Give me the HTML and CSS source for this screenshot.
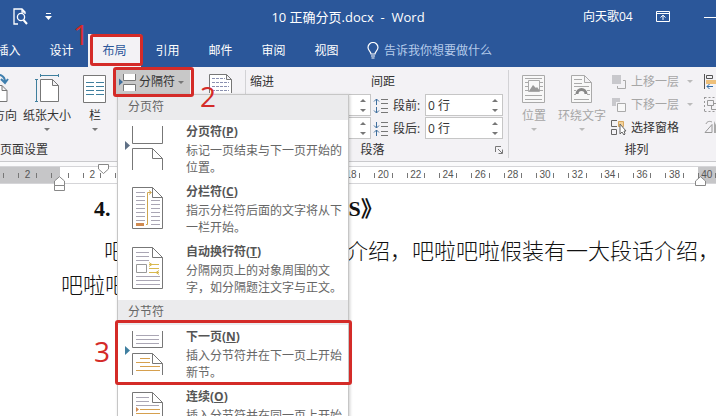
FILE: index.html
```html
<!DOCTYPE html>
<html lang="zh-CN">

<head>
    <meta charset="UTF-8">
    <meta name="viewport" content="width=device-width, initial-scale=1">
    <title>10 正确分页.docx - Word</title>
    <link rel="stylesheet" href="styles.css">
</head>

<body>
    <div class="app">
        <header class="title-bar">
            <div class="quick-access">
                <svg width="16" height="18" viewBox="0 0 16 18" fill="none" stroke="#fff" stroke-width="1.3">
                    <path d="M5 16H1V1h8l3 3v2M9 1v3h3" />
                    <circle cx="8" cy="9" r="3.6" />
                    <path d="M10.500 12l3.500 4" stroke-width="2" />
                </svg>
                <svg width="7" height="8" viewBox="0 0 7 8" fill="#fff">
                    <path d="M1 0h5v1H1zM0 3h7L3.500 7z" />
                </svg>
            </div>
            <div class="doc-title">10 正确分页.docx&nbsp; -&nbsp; Word</div>
            <div class="window-tools">
                <span class="user">向天歌04</span>
                <svg width="14" height="12" viewBox="0 0 14 12" fill="none" stroke="#fff">
                    <path d="M.5.5h13v10H.5zM.5 2.500h13M7 9V4.500M4.500 6.500L7 4.200l2.500 2.300" />
                </svg>
                <span class="minimize"></span>
            </div>
        </header>

        <nav class="tabs">
            <button class="tab">插入</button>
            <button class="tab">设计</button>
            <button class="tab active">布局<span class="mark mark-tab"></span><span class="step step-1">1</span></button>
            <button class="tab">引用</button>
            <button class="tab">邮件</button>
            <button class="tab">审阅</button>
            <button class="tab">视图</button>
            <button class="tell-me">
                <svg width="12" height="17" viewBox="0 0 12 17" fill="none" stroke="#fff" stroke-width="1.2">
                    <path d="M4 12C4 9.500 1 8.500 1 5.500a5 5 0 0 1 10 0C11 8.500 8 9.500 8 12zM4 14h4M4.500 16h3" />
                </svg>
                告诉我你想要做什么
            </button>
        </nav>

        <section class="ribbon">
            <div class="group page-setup">
                <div class="group-body">
                    <button class="big orient">
                        <svg width="32" height="32" viewBox="0 0 32 32" fill="none" stroke="#777">
                            <path d="M15 29.500V13.500h10l5 5v11zM25 13.500v5h5" fill="#fff" />
                            <path d="M16 4c7-3 12 0 12 6M24 7l4 4 3-4" stroke="#3f7fae" stroke-width="2" />
                        </svg>
                        <span>纸张方向</span>
                    </button>
                    <button class="big">
                        <svg width="32" height="32" viewBox="0 0 32 32" fill="none" stroke="#777">
                            <path d="M9.500 7.500h12l6 6v16h-18zM21.500 7.500v6h6" fill="#fff" />
                            <path d="M9 3.500h19M9.500 2v3M27.500 2v3M5.500 7v23M4 7.500h3M4 29.500h3" stroke="#3f7f9e" />
                        </svg>
                        <span>纸张大小</span>
                        <i class="caret"></i>
                    </button>
                    <button class="big columns">
                        <svg width="32" height="32" viewBox="0 0 32 32" fill="none" stroke="#777">
                            <path d="M4.500 3.500h22v27h-22z" fill="#fff" />
                            <path d="M7 10.500h8M7 14.500h8M7 18.500h8M7 22.500h8M17 10.500h8M17 14.500h8M17 18.500h8M17 22.500h8" stroke="#3f7f9e" />
                        </svg>
                        <span>栏</span>
                        <i class="caret"></i>
                    </button>
                    <div class="breaks">
                        <button class="breaks-button">
                            <svg width="17" height="17" viewBox="0 0 17 17" fill="#fff" stroke="#777">
                                <path d="M4.500 0v6.500h12V0M4.500 17v-6.500h12V17" />
                                <path d="M0 4.500l4 3.500-4 3.500z" fill="#3f6f9e" stroke="none" />
                            </svg>
                            <span>分隔符</span>
                            <i class="caret"></i>
                        </button>
                        <div class="menu">
                            <div class="menu-title">分页符</div>
                            <button class="menu-item">
                                <svg width="44" height="52" viewBox="0 0 44 52" fill="none" stroke="#777">
                                    <path d="M10.500 4v17.500h30V4M10.500 48V26.500h20l10 10V48M30.500 26.500v10h10" />
                                    <path d="M3 19l5 4.500L3 28z" fill="#5f7085" stroke="none" />
                                </svg>
                                <span class="item-text"><b>分页符(<u>P</u>)</b>标记一页结束与下一页开始的位置。</span>
                            </button>
                            <button class="menu-item">
                                <svg width="44" height="52" viewBox="0 0 44 52" fill="none" stroke="#777">
                                    <path d="M10.500 5.500h20l10 10v31h-30zM30.500 5.500v10h10" />
                                    <path d="M14 10.500h9M14 14.500h9M14 18.500h9M14 22.500h9M14 26.500h9M14 30.500h9M14 34.500h9M14 38.500h9M29 18.500h9M29 22.500h9M29 26.500h9M29 30.500h9M29 34.500h9M29 38.500h9M29 42.500h9" stroke="#aaa6b4" />
                                    <path d="M24 42.500h1.500v-32H29M27 8.500l2.500 2-2.500 2" stroke="#cfa64f" />
                                    <path d="M14 41h8v3h-8z" fill="#d08a50" stroke="none" />
                                </svg>
                                <span class="item-text"><b>分栏符(<u>C</u>)</b>指示分栏符后面的文字将从下一栏开始。</span>
                            </button>
                            <button class="menu-item">
                                <svg width="44" height="52" viewBox="0 0 44 52" fill="none" stroke="#777">
                                    <path d="M10.500 5.500h20l10 10v31h-30zM30.500 5.500v10h10" />
                                    <path d="M14 10.500h13M14 14.500h13M14 18.500h13M14 34.500h24M14 38.500h24M14 42.500h24" stroke="#aaa6b4" />
                                    <path d="M14.500 22.500h10v8h-10z" stroke="#999" />
                                    <path d="M27 22.500h10M27 26.500h10M27 30.500h10M27 20.500l3 2-3 2M37 28.500l-3 2 3 2" stroke="#d9b94e" />
                                </svg>
                                <span class="item-text"><b>自动换行符(<u>T</u>)</b>分隔网页上的对象周围的文字，如分隔题注文字与正文。</span>
                            </button>
                            <div class="menu-title">分节符</div>
                            <button class="menu-item">
                                <svg width="44" height="52" viewBox="0 0 44 52" fill="none" stroke="#777">
                                    <path d="M10.500 4v16.500h30V4M10.500 48V26.500h20l10 10V48M30.500 26.500v10h10" />
                                    <path d="M14 8.500h23M14 12.500h23M14 16.500h23" stroke="#aaa6b4" />
                                    <path d="M18 31.500h10M14 35.500h14M18 39.500h20M14 43.500h24" stroke="#d6a04e" />
                                    <path d="M3 19l5 4.500L3 28z" fill="#3f7fa0" stroke="none" />
                                </svg>
                                <span class="item-text"><b>下一页(<u>N</u>)</b>插入分节符并在下一页上开始新节。</span>
                                <span class="mark mark-item"></span>
                                <span class="step step-3">3</span>
                            </button>
                            <button class="menu-item">
                                <svg width="44" height="52" viewBox="0 0 44 52" fill="none" stroke="#777">
                                    <path d="M10.500 5.500h20l10 10v31h-30zM30.500 5.500v10h10" />
                                    <path d="M14 10.500h13M14 14.500h13M14 18.500h23" stroke="#aaa6b4" />
                                    <path d="M18 22.500h20M14 26.500h24M14 30.500h24" stroke="#d6a04e" />
                                    <path d="M14 20l3 2.500-3 2.500z" fill="#d08a50" stroke="none" />
                                </svg>
                                <span class="item-text"><b>连续(<u>O</u>)</b>插入分节符并在同一页上开始新节。</span>
                            </button>
                        </div>
                        <span class="mark mark-breaks"></span>
                        <span class="step step-2">2</span>
                    </div>
                    <svg class="hyphen-icon" width="24" height="23" viewBox="0 0 24 23" fill="none" stroke="#777">
                        <path d="M.5 23V4.500h17l5 5V23M17.500 4.500v5h5" fill="#fff" />
                        <path d="M3 8.500h13M3 12.500h17M3 16.500h17M3 20.500h17" stroke="#8a90b0" stroke-dasharray="3 1" />
                    </svg>
                </div>
                <div class="group-label">页面设置</div>
            </div>

            <div class="group paragraph">
                <div class="group-body">
                    <div class="indent">
                        <h3>缩进</h3>
                        <div class="spin"><input type="text" aria-label="左缩进"><i class="up"></i><i class="down"></i></div>
                        <div class="spin"><input type="text" aria-label="右缩进"><i class="up"></i><i class="down"></i></div>
                    </div>
                    <div class="spacing">
                        <h3>间距</h3>
                        <div class="field">
                            <svg width="16" height="16" viewBox="0 0 16 16" fill="none" stroke="#777">
                                <path d="M8 1.500h7M8 5.500h7M8 10.500h7M8 14.500h7" />
                                <path d="M3.500 7V1M1 3.500L3.500 1 6 3.500M3.500 9v6M1 12.500L3.500 15 6 12.500" stroke="#3f6f9e" />
                            </svg>
                            <label for="before">段前:</label>
                            <div class="spin"><input type="text" id="before" value="0 行"><i class="up"></i><i class="down"></i></div>
                        </div>
                        <div class="field">
                            <svg width="16" height="16" viewBox="0 0 16 16" fill="none" stroke="#777">
                                <path d="M8 1.500h7M8 5.500h7M8 10.500h7M8 14.500h7" />
                                <path d="M3.500 1v6M1 4.500L3.500 7 6 4.500M3.500 15V9M1 11.500L3.500 9 6 11.500" stroke="#3f6f9e" />
                            </svg>
                            <label for="after">段后:</label>
                            <div class="spin"><input type="text" id="after" value="0 行"><i class="up"></i><i class="down"></i></div>
                        </div>
                    </div>
                </div>
                <div class="group-label">
                    <span>段落</span>
                    <svg width="8" height="8" viewBox="0 0 8 8" fill="none" stroke="#777">
                        <path d="M.5 6V.5H6M3 3l4 4M7.500 3.500v4h-4" />
                    </svg>
                </div>
            </div>

            <div class="group arrange">
                <div class="group-body">
                    <button class="big position" disabled>
                        <svg width="32" height="32" viewBox="0 0 32 32" fill="none" stroke="#aaa">
                            <path d="M4.500 3.500h22v27h-22z" fill="#f8f8f8" />
                            <path d="M7 6.500h17M7 23.500h17M7 27.500h17M7 10.500h3M7 14.500h3M7 18.500h3M22 10.500h3M22 14.500h3M22 18.500h3M10.500 8.500h11v11h-11z" />
                            <path d="M11 19l4-6 3 3 1-1 3 4z" fill="#999" stroke="none" />
                        </svg>
                        <span>位置</span>
                        <i class="caret"></i>
                    </button>
                    <button class="big wrap" disabled>
                        <svg width="32" height="32" viewBox="0 0 32 32" fill="none" stroke="#aaa">
                            <path d="M5.500 3.500h13l7 7v20h-20zM18.500 3.500v7h7" fill="#f8f8f8" />
                            <path d="M8 7.500h8M8 11.500h8M8 14.500h15M8 18.500h2M21 18.500h3M8 22.500h2M21 22.500h3M8 27.500h15" />
                            <path d="M11 22a4.500 4.500 0 0 1 9 0" stroke="#888" stroke-width="3" />
                        </svg>
                        <span>环绕文字</span>
                        <i class="caret"></i>
                    </button>
                    <div class="stack">
                        <button class="small" disabled>
                            <svg width="16" height="16" viewBox="0 0 16 16" fill="none" stroke="#aaa">
                                <path d="M1 1h9v9H1z" fill="#c8c8cc" stroke="none" />
                                <path d="M12 6.500h2.500v8h-8V12" />
                            </svg>
                            <span>上移一层</span><i class="caret"></i>
                        </button>
                        <button class="small" disabled>
                            <svg width="16" height="16" viewBox="0 0 16 16" fill="none" stroke="#aaa">
                                <path d="M1 1h8v4H5v4H1z" fill="#c8c8cc" stroke="none" />
                                <path d="M6.500 6.500h8v8h-8z" fill="#f8f8f8" />
                            </svg>
                            <span>下移一层</span><i class="caret"></i>
                        </button>
                        <button class="small">
                            <svg width="16" height="16" viewBox="0 0 16 16" fill="none" stroke="#666">
                                <path d="M6 .5H.5v6H6M.5 9.500h5v5h-5z" />
                                <path d="M7.500 1.500h5v5h-5z" fill="#f3d29a" stroke="#d9a860" />
                                <path d="M9 4v10l2-2 2 3 1-1-1-3h2z" fill="#fff" />
                            </svg>
                            <span>选择窗格</span>
                        </button>
                    </div>
                    <div class="stack more">
                        <svg width="16" height="23" viewBox="0 0 16 23" fill="none" stroke="#555">
                            <path d="M.5 4v15" />
                            <path d="M2.500 5.500h6v3h-6z" />
                            <path d="M2 10h12v4H2z" fill="#eec07a" stroke="none" />
                            <path d="M9 16.500H3M5.500 14L3 16.500 5.500 19" stroke="#2f6ca8" />
                        </svg>
                        <svg width="16" height="23" viewBox="0 0 16 23" fill="none" stroke="#999">
                            <path d="M.5 4.500h15M.5 18.500h15M.5 4v14" stroke-dasharray="2 2" />
                            <path d="M3.500 7.500h6v5h-6zM9.500 10.500h6v6h-8v-4" />
                        </svg>
                        <svg width="16" height="23" viewBox="0 0 16 23" fill="none" stroke="#999">
                            <path d="M1 16.500h7v-8zM2 8c1-3 4-3 6-2" />
                            <path d="M10 5l6 12h-6z" fill="#aaa" stroke="none" />
                        </svg>
                    </div>
                </div>
                <div class="group-label">排列</div>
            </div>
        </section>

        <div class="ruler">
            <div class="ruler-scale">
                <span class="shade"></span><span class="shade">2</span><span class="edge-left"></span><span>2</span>
                <span></span><span></span><span></span><span></span><span></span><span></span><span></span>
                <span>18</span><span>20</span><span>22</span><span>24</span><span>26</span><span>28</span><span>30</span>
                <span>32</span><span>34</span><span>36</span><span>38</span><span class="edge-right">40</span>
            </div>
            <svg class="marker marker-left" width="11" height="16" viewBox="0 0 11 16" fill="#fff" stroke="#888">
                <path d="M.5 9.500V5L5.500.7 10.500 5v4.500zM.5 9.500h10v5H.5z" />
            </svg>
            <svg class="marker marker-first" width="11" height="11" viewBox="0 0 11 11" fill="#fff" stroke="#888">
                <path d="M.5.5h10V5l-5 4.500L.5 5z" />
            </svg>
            <svg class="marker marker-right" width="11" height="11" viewBox="0 0 11 11" fill="#fff" stroke="#888">
                <path d="M.5 9.500V5L5.500.7 10.500 5v4.500z" />
            </svg>
        </div>

        <main class="page">
            <h1><span>4.</span><span>S》</span></h1>
            <p class="first-line"><span>吧</span><span>介绍，吧啦吧啦假装有一大段话介绍，</span></p>
            <p>吧啦吧</p>
        </main>
    </div>
</body>

</html>
```
FILE: styles.css
```css
* {
    box-sizing: border-box;
}

body {
    margin: 0;
    font-family: "Open Sans", "Noto Sans CJK SC", sans-serif;
    font-size: 12px;
    line-height: 18px;
    color: #333;
    background: #fff;
}

button {
    margin: 0;
    padding: 0;
    border: none;
    background: none;
    font: inherit;
    color: inherit;
    white-space: nowrap;
}

svg {
    display: block;
    flex: none;
}

.app {
    height: 100vh;
    overflow: hidden;
}

/* title bar and tabs */
.title-bar {
    display: flex;
    align-items: center;
    height: 34px;
    background: #2b579a;
    color: #fff;
}

.quick-access {
    display: flex;
    align-items: center;
    gap: 16px;
    width: 113px;
    padding-left: 13px;
}

.doc-title {
    flex: 1;
    font-size: 13px;
    text-align: center;
}

.window-tools {
    display: flex;
    align-items: center;
    width: 133px;
}

.user {
    width: 76px;
}

.minimize {
    flex: none;
    width: 12px;
    height: 1px;
    margin-left: 34px;
    background: #fff;
}

.tabs {
    display: flex;
    height: 33px;
    padding-left: 35px;
    margin-left: -53px;
    background: #2b579a;
    color: #fff;
}

.tab {
    position: relative;
    width: 53px;
}

.tab.active {
    background: #f3f2f5;
    color: #2b579a;
}

.tell-me {
    display: flex;
    align-items: center;
    gap: 5px;
    padding-left: 14px;
    color: #b5cbea;
}

/* ribbon */
.ribbon {
    display: flex;
    height: 95px;
    padding-top: 3px;
    background: #f3f2f5;
    border-bottom: 1px solid #c9c9cc;
}

.group {
    flex: none;
    height: 88px;
    border-right: 1px solid #d2d2d5;
}

.group-body {
    display: flex;
    height: 70px;
}

.group-label {
    display: flex;
    align-items: center;
    height: 20px;
}

.page-setup {
    width: 246px;
}

.paragraph {
    width: 263px;
    padding: 0 5px 0 4px;
}

.paragraph .group-label span {
    flex: 1;
    text-align: center;
}

.arrange {
    width: 254px;
    padding-left: 2px;
}

.arrange .group-label {
    justify-content: center;
}

.big {
    display: flex;
    flex: none;
    flex-direction: column;
    align-items: center;
    gap: 4px;
    width: 54px;
    padding-top: 2px;
}

.big span {
    line-height: 16px;
}

.orient {
    margin-left: -34px;
}

.columns {
    width: 42px;
}

.position {
    width: 46px;
}

.wrap {
    width: 50px;
}

button:disabled {
    color: #a6a6a6;
}

.caret,
.up,
.down {
    border: 3px solid transparent;
}

.caret,
.down {
    border-top-color: #777;
    border-bottom: none;
}

.up {
    border-bottom-color: #777;
    border-top: none;
}

button:disabled .caret {
    border-top-color: #bbb;
}

.hyphen-icon {
    margin-left: 19px;
}

.spin {
    display: grid;
    grid-template-columns: 1fr 14px;
    align-content: space-evenly;
    align-items: center;
    justify-items: center;
    height: 22px;
    margin-bottom: 1px;
    border: 1px solid #c6c6c6;
    background: #fff;
}

.spin input {
    grid-row: span 2;
    width: 100%;
    height: 20px;
    padding: 0 2px;
    border: none;
    background: none;
    font: inherit;
    color: inherit;
    outline: none;
}

h3 {
    margin: 0;
    font-size: 12px;
    font-weight: normal;
    line-height: 24px;
}

.indent {
    width: 121px;
}

.field {
    display: flex;
    align-items: center;
    padding-left: 2px;
}

.field label {
    width: 36px;
    padding-left: 4px;
}

.field .spin {
    width: 78px;
}

.stack {
    display: flex;
    flex-direction: column;
    padding-left: 4px;
}

.small {
    display: flex;
    align-items: center;
    gap: 4px;
    height: 23px;
}

.small .caret {
    margin-left: 4px;
}

.more {
    padding-left: 11px;
}

/* breaks button and its menu */
.breaks {
    position: relative;
    width: 74px;
}

.breaks-button {
    display: flex;
    align-items: center;
    gap: 3px;
    width: 100%;
    height: 24px;
    padding-left: 3px;
    background: #c8c8c8;
}

.menu {
    position: absolute;
    top: 24px;
    left: 1px;
    z-index: 1;
    width: 232px;
    border: 1px solid #c6c6c6;
    background: #fff;
    box-shadow: 1px 1px 3px rgba(0, 0, 0, 0.2);
    color: #666;
}

.menu-title {
    height: 25px;
    padding-left: 10px;
    background: #ebebed;
    line-height: 24px;
}

.menu-item {
    position: relative;
    display: flex;
    gap: 20px;
    width: 100%;
    height: 60px;
    padding: 2px 4px;
    text-align: left;
    white-space: normal;
}

.item-text {
    flex: 1;
    line-height: 17px;
}

.item-text b {
    display: block;
    line-height: 20px;
    color: #555;
}

/* numbered steps drawn over the window */
.mark {
    position: absolute;
    z-index: 2;
    border: 3px solid #d42b28;
    border-radius: 3px;
}

.mark-tab {
    inset: 0 -2px 1px 2px;
}

.mark-breaks {
    top: -3px;
    left: -3px;
    width: 81px;
    height: 30px;
}

.mark-item {
    inset: -5px -4px 0 -3px;
}

.step {
    position: absolute;
    z-index: 2;
    font-size: 28px;
    line-height: 28px;
    color: #d42b28;
}

.step-1 {
    top: -14px;
    left: -15px;
}

.step-2 {
    top: 12px;
    left: 84px;
}

.step-3 {
    top: 12px;
    left: -24px;
}

/* ruler */
.ruler {
    position: relative;
    padding-top: 4px;
    background: #fafafb;
}

.ruler-scale {
    display: grid;
    grid-template-columns: repeat(23, 1fr);
    height: 18px;
    margin: 0 -7px 0 -21px;
    border-top: 1px solid #d5d5d8;
    border-bottom: 1px solid #d5d5d8;
    background: #fff;
    font-family: "Liberation Sans", sans-serif;
    font-size: 10px;
    line-height: 16px;
    color: #555;
}

.ruler-scale span {
    display: flex;
    align-items: center;
    justify-content: space-between;
    padding: 0 7px;
}

.ruler-scale span::before,
.ruler-scale span::after {
    content: "";
    width: 1px;
    height: 5px;
    background: #777;
}

.ruler-scale .shade {
    background: #c6c6c8;
}

.ruler-scale .edge-left {
    background: linear-gradient(to right, #c6c6c8 50%, #fff 50%);
}

.ruler-scale .edge-right {
    background: linear-gradient(to right, #fff 22%, #c6c6c8 22%);
}

.marker {
    position: absolute;
}

.marker-left {
    top: 14px;
    left: 54px;
}

.marker-first {
    top: 2px;
    left: 98px;
}

.marker-right {
    top: 14px;
    right: 10px;
}

/* document */
.page {
    padding: 8px 0 0 61px;
    font-family: "Liberation Serif", "Noto Sans CJK SC", serif;
    font-size: 22px;
    line-height: 34px;
    color: #111;
    white-space: nowrap;
}

.page h1 {
    display: flex;
    gap: 238px;
    margin: 0;
    padding-left: 33px;
    font-size: 22px;
}

.page p {
    margin: 0;
    font-weight: 300;
}

.page .first-line {
    display: flex;
    gap: 220px;
    margin-top: 9px;
    padding-left: 43px;
}
```
